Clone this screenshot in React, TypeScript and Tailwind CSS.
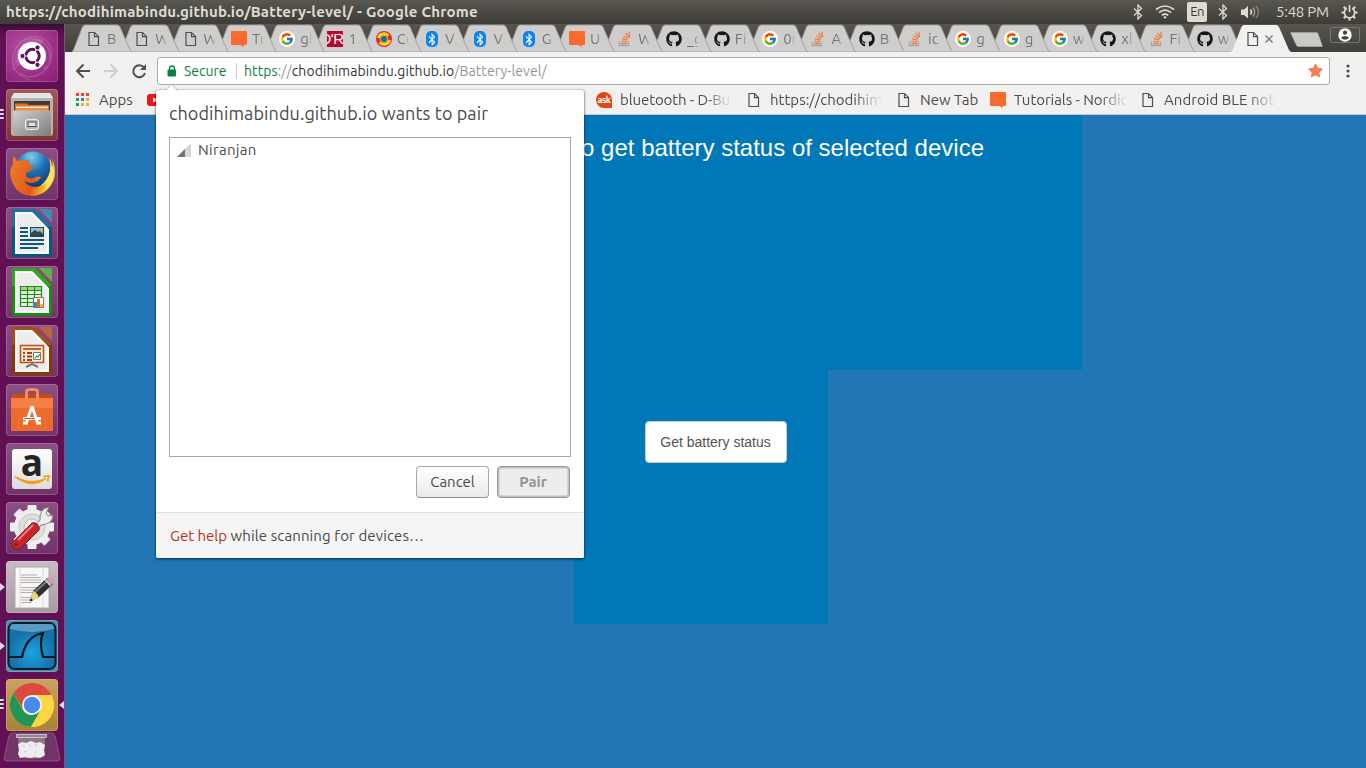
import React from "react";
import { FcGoogle } from "react-icons/fc";
import { FaGithub, FaBluetoothB, FaStar } from "react-icons/fa";

type IconKind = "doc" | "orange" | "google" | "dr" | "conrad" | "bt" | "so" | "gh";

function DocIcon() {
  return (
    <svg width="16" height="16" viewBox="0 0 16 16" fill="none" stroke="#4d4d4d" strokeWidth="1.2">
      <path d="M3 1.500h5.500l4 3.900v9.100H3zM8.500 1.600v4h4" />
    </svg>
  );
}

function Favicon({ kind }: { kind: IconKind }) {
  switch (kind) {
    case "doc":
      return <DocIcon />;
    case "orange":
      return (
        <svg width="16" height="16" viewBox="0 0 16 16">
          <path d="M1 0h14q1 0 1 1v12q0 1-1 1h-2.500l.5 2L9 14H1q-1 0-1-1V1q0-1 1-1z" fill="#fa6a2e" />
        </svg>
      );
    case "google":
      return (
        <div className="flex size-4 items-center justify-center rounded-full bg-white">
          <FcGoogle size={14} className="shrink-0" />
        </div>
      );
    case "dr":
      return (
        <div className="flex size-4 items-center justify-end overflow-hidden bg-[#b8082c] font-['Liberation_Sans',sans-serif] text-[15px] leading-4 tracking-[-0.5px] text-white">
          D'R
        </div>
      );
    case "conrad":
      return (
        <svg width="16" height="16" viewBox="0 0 16 16">
          <circle cx="8" cy="8" r="8" fill="#e02b26" />
          <path d="M1 7a7 7 0 0 1 12.500-3L11 5.500A4.500 4.500 0 0 0 4 7zM15 9a7 7 0 0 1-12.500 3L5 10.500A4.500 4.500 0 0 0 12 9z" fill="#ffd22e" />
          <circle cx="8" cy="8" r="4.300" fill="#f2a51d" />
          <circle cx="8" cy="8" r="3" fill="#146f9d" />
        </svg>
      );
    case "bt":
      return (
        <div className="flex h-4 w-3 items-center justify-center rounded-[5px] bg-[#0a84f5] text-white">
          <FaBluetoothB size={13} />
        </div>
      );
    case "so":
      return (
        <svg width="16" height="16" viewBox="0 0 16 16" fill="none">
          <path d="M2.500 10.500v4h9v-4" stroke="#a6a6a6" strokeWidth="1.300" />
          <path d="M4.300 12.700h5.700M4.400 10.300l5.700.6M5 7.600l5.400 1.600M6.300 4.800l4.800 2.900M8.600 2.200l3.500 4.500M11.800.800l.9 5.200" stroke="#f0793b" strokeWidth="1.300" />
        </svg>
      );
    case "gh":
      return <FaGithub size={16} color="#17151a" />;
  }
}

const tabs: { icon: IconKind; text: string }[] = [
  { icon: "doc", text: "B" },
  { icon: "doc", text: "W" },
  { icon: "doc", text: "W" },
  { icon: "orange", text: "Tu" },
  { icon: "google", text: "gl" },
  { icon: "dr", text: "1." },
  { icon: "conrad", text: "Co" },
  { icon: "bt", text: "V" },
  { icon: "bt", text: "V" },
  { icon: "bt", text: "G" },
  { icon: "orange", text: "U" },
  { icon: "so", text: "W" },
  { icon: "gh", text: "_g" },
  { icon: "gh", text: "Fi" },
  { icon: "google", text: "0(" },
  { icon: "so", text: "A" },
  { icon: "gh", text: "B" },
  { icon: "so", text: "ic" },
  { icon: "google", text: "g" },
  { icon: "google", text: "g" },
  { icon: "google", text: "w" },
  { icon: "gh", text: "xl" },
  { icon: "so", text: "Fi" },
  { icon: "gh", text: "w" },
];

function Tab({ icon, text, z, active = false }: { icon: IconKind; text: string; z: number; active?: boolean }) {
  return (
    <div className="relative h-[28px] w-[48.3px] shrink-0" style={{ zIndex: z }}>
      <svg className="absolute top-0 left-0" width="62" height="28" viewBox="0 0 62 28">
        <path
          d="M0 28L1.500 26L10 4Q11 1 13 1H45Q47 1 48 3L58 26L60 28z"
          fill={active ? "#f2f1f0" : "#d0cecd"}
          stroke={active ? "none" : "#a09e9b"}
          strokeWidth="0.9"
        />
      </svg>
      <div className="relative flex h-full items-center pt-[2px] pl-[14px]">
        <div className="flex w-4 shrink-0 justify-center">
          <Favicon kind={icon} />
        </div>
        {active ? (
          <svg className="ml-[3px] shrink-0" width="10" height="10" viewBox="0 0 10 10" stroke="#858585" strokeWidth="1.600">
            <path d="M1.500 1.500l7 7M8.500 1.500l-7 7" />
          </svg>
        ) : (
          <span className="ml-[5px] w-[11px] shrink-0 overflow-hidden [mask-image:linear-gradient(to_right,#000_60%,rgba(0,0,0,0.25))] text-[15px] leading-5 whitespace-nowrap text-[#777573]">
            {text}
          </span>
        )}
      </div>
    </div>
  );
}

function BluetoothGlyph() {
  return (
    <svg width="10" height="16" viewBox="0 0 10 16" fill="none" stroke="#dfdbd2" strokeWidth="1.300">
      <path d="M1 4.500l7.500 7L5 15V1l3.500 3.500L1 11.500" />
    </svg>
  );
}

function MenuBar() {
  return (
    <div className="flex h-6 shrink-0 items-center bg-linear-to-b from-[#595750] to-[#3d3c37] pl-[6px] text-[#dfdbd2]">
      <div className="text-[15px] leading-5 font-bold tracking-[0.225px] whitespace-nowrap">
        https://chodihimabindu.github.io/Battery-level/ - Google Chrome
      </div>
      <div className="ml-auto flex items-center">
        <BluetoothGlyph />
        <svg className="ml-[12px]" width="20" height="14" viewBox="0 0 20 14" fill="none" stroke="#dfdbd2" strokeWidth="1.700">
          <path d="M1 4.500q9-7 18 0M4 7.600q6-4.800 12 0M6.800 10.300q3.200-2.500 6.400 0" />
          <path d="M8.300 12l1.700 2 1.700-2q-1.700-1.300-3.400 0z" fill="#dfdbd2" stroke="none" />
        </svg>
        <span className="ml-[12px] flex h-[20px] w-5 items-center justify-center rounded-[2px] bg-[#dfdbd2] text-[13px] tracking-[-0.5px] text-[#3c3b37]">
          En
        </span>
        <span className="ml-[11px]">
          <BluetoothGlyph />
        </span>
        <svg className="ml-[12px]" width="22" height="16" viewBox="0 0 22 16" fill="none" strokeWidth="1.300">
          <path d="M1 5.500h3l4-3.500v12.500L4 11H1z" fill="#dfdbd2" />
          <path d="M10.500 5.500q2 2.500 0 5" stroke="#dfdbd2" strokeWidth="1.600" />
          <path d="M13 3.500q3.500 4.500 0 9" stroke="#a3a097" />
          <path d="M16 2q5 6 0 12" stroke="#85827a" />
        </svg>
        <span className="ml-[14px] w-[54px] text-[15px] leading-5 tracking-[-0.25px] whitespace-nowrap">5:48 PM</span>
        <svg className="mr-[8px] ml-[11px]" width="17" height="17" viewBox="0 0 17 17" fill="none" stroke="#dfdbd2">
          <path d="M5.800 4.200a5.200 5.200 0 1 0 5.400 0" strokeWidth="1.700" />
          <path d="M8.500 1v7" strokeWidth="1.700" />
          <path d="M2.800 2.800l2 2M14.200 2.800l-2 2M.5 8.500h3M13.500 8.500h3M2.800 14.200l2-2M14.200 14.200l-2-2M8.500 13.500v3" strokeWidth="2" />
        </svg>
      </div>
    </div>
  );
}

function LibreDoc({ main, light, children }: { main: string; light: string; children: React.ReactNode }) {
  return (
    <svg width="52" height="52" viewBox="0 0 52 52">
      <path d="M8 2h21l17 18v28q0 2-2 2H8q-2 0-2-2V4q0-2 2-2z" fill={main} />
      <path d="M6 20V4q0-2 2-2h21l17 18z" fill={light} opacity=".45" />
      <path d="M9 5h17l17 17.500V47H9z" fill="#fcfcfc" />
      <path d="M11 7h14l16 16.500V45H11z" fill="#ededed" />
      <path d="M33 2h11q2 0 2 2v12z" fill={light} opacity=".85" />
      <path d="M26 5l17 17.500-6-2z" fill="#fff" />
      {children}
    </svg>
  );
}

function UbuntuIcon() {
  return (
    <svg width="52" height="52" viewBox="0 0 52 52">
      <path d="M8 41C2 17 20 2 36 8c12 5 13 24 2 31M13 13c15-10 32-1 31 16-1 14-18 23-30 14M7 29c0 10 6 18 17 21" fill="none" stroke="#e3b6d9" strokeWidth="1.200" opacity=".25" />
      <path d="M10 38C5 20 20 4 38 10L26 26z" fill="#fff" opacity=".12" />
      <circle cx="26" cy="26" r="14" fill="#fff" />
      <circle cx="26.500" cy="26" r="6.700" fill="none" stroke="#5c1551" strokeWidth="3" />
      <path d="M26.500 26L13 26M26.500 26l7-12M26.500 26l7 12" stroke="#fff" strokeWidth="1.200" />
      <circle cx="26.500" cy="26" r="5" fill="#fff" />
      <g fill="#5c1551" stroke="#fff">
        <circle cx="16.500" cy="26" r="2.600" />
        <circle cx="31.500" cy="17.500" r="2.600" />
        <circle cx="31.500" cy="34.800" r="2.600" />
      </g>
    </svg>
  );
}

function FilesIcon() {
  return (
    <svg width="52" height="52" viewBox="0 0 52 52">
      <defs>
        <linearGradient id="cab" x1="0" y1="0" x2="1" y2="1">
          <stop offset="0" stopColor="#d0d0d0" />
          <stop offset="1" stopColor="#7c7c7c" />
        </linearGradient>
      </defs>
      <path d="M8 4h36l3 5v35q0 3-3 3H8q-3 0-3-3V9z" fill="#b4b4b4" />
      <path d="M8 4h36l3 5H5z" fill="#e6e6e6" />
      <path d="M8 12h36v10H8z" fill="#453b36" />
      <path d="M9 14.500h12l2 1.500h20v6H9z" fill="#dc742c" />
      <path d="M10 17.500h32v1.800H10z" fill="#f7e5d0" />
      <path d="M10 19.300h32V22H10z" fill="#ef8e36" />
      <path d="M7 21.500h38v24q0 1.500-1 1.500H8q-1 0-1-1z" fill="url(#cab)" />
      <rect x="19.500" y="30.500" width="13" height="10" rx="2" fill="#b5b5b5" stroke="#eee" />
      <rect x="22" y="33" width="8" height="4.500" fill="#e4e4e4" stroke="#505050" />
    </svg>
  );
}

function FirefoxIcon() {
  return (
    <svg width="52" height="52" viewBox="0 0 52 52">
      <defs>
        <radialGradient id="globe" cx=".45" cy=".15" r=".8">
          <stop offset="0" stopColor="#7fd0f2" />
          <stop offset=".5" stopColor="#1c71b4" />
          <stop offset="1" stopColor="#123b78" />
        </radialGradient>
        <linearGradient id="fox" x1="0" y1="0" x2="1" y2=".3">
          <stop offset="0" stopColor="#f07f25" />
          <stop offset=".65" stopColor="#e4571c" />
          <stop offset=".95" stopColor="#f9c430" />
        </linearGradient>
      </defs>
      <circle cx="27" cy="22" r="18.500" fill="url(#globe)" />
      <path d="M8 8l3 5q5-2 10 0l4-3q-3 4-2 7 2 2 5 2-2 4-7 5-2 3 0 5 4 3 8 0 3-1 6 0-3 5-9 6-5 0-8-3 3 7 12 7 10-1 13-11l3-9q2-5-2-11 5 6 5 16 0 10-7 17-7 7-16 7-14-1-19-12Q1 24 7 16q-1-4 1-8z" fill="url(#fox)" />
      <path d="M43 10q3 4 3 8 3 3 2 10-2 10-9 14 2-5 1-7-3 3-6 3 8-6 10-15 1-7-1-13z" fill="#fce15c" />
    </svg>
  );
}

function WriterIcon() {
  return (
    <LibreDoc main="#075783" light="#3a92c2">
      <path d="M14 21h8M14 25h8M14 29h8M14 33h24M14 37h24M14 41h18" stroke="#0e5786" strokeWidth="2" />
      <rect x="24.500" y="20.500" width="13" height="9" fill="#87c1de" stroke="#154865" />
      <path d="M25 29v-3l4-3 3 2 2-1 3 3v2z" fill="#34464d" />
      <circle cx="35.500" cy="22.500" r="1.500" fill="#f0b91f" />
    </LibreDoc>
  );
}

function CalcIcon() {
  return (
    <LibreDoc main="#188c0c" light="#55c43a">
      <path d="M14 20h22v21H14z" fill="#e2f5dc" />
      <path d="M14 20h22v4H14z" fill="#a0da8c" />
      <path d="M14.500 20.500h21v20h-21zM14 24.500h22M14 28.500h22M14 32.500h22M14 36.500h22M21.500 20v21M28.500 20v21" fill="none" stroke="#218b16" strokeWidth="1.200" />
      <path d="M27.500 31.500h10v10h-10z" fill="#fff" stroke="#777" />
      <path d="M28 36h3v5h-3z" fill="#2790cd" />
      <path d="M31 33h3v8h-3z" fill="#e16716" />
      <path d="M34 38h3v3h-3z" fill="#f4bd21" />
    </LibreDoc>
  );
}

function ImpressIcon() {
  return (
    <LibreDoc main="#8d3907" light="#bf6d38">
      <path d="M14.500 20.500h23v17h-23z" fill="#fbeade" stroke="#bf4e13" strokeWidth="1.500" />
      <path d="M17 24h18" stroke="#d35b1b" strokeWidth="2" />
      <path d="M17 28h2M21 28h5M17 31.500h2M21 31.500h5M17 35h2M21 35h5" stroke="#9d4617" strokeWidth="2" />
      <path d="M27.500 27.500h7v7h-7z" fill="#fff" stroke="#777" />
      <path d="M29 33l2-2 1 1 2-3" fill="none" stroke="#2fa53b" strokeWidth="1.200" />
      <path d="M26 38v2M26 39l-6 3M26 39l6 3" stroke="#777" strokeWidth="2" />
    </LibreDoc>
  );
}

function SoftwareIcon() {
  return (
    <svg width="52" height="52" viewBox="0 0 52 52">
      <path d="M5 14l2-4h38l2 4v33H5z" fill="#ed6b2d" />
      <path d="M5 14l2-4h38l2 4z" fill="#c54c1a" />
      <path d="M5 14h42v10H5z" fill="#f57e43" />
      <path d="M20.500 17V8q0-2.500 3-2.500h5q3 0 3 2.500v9" fill="none" stroke="#f08a5e" strokeWidth="3" />
      <path d="M20 40l5.500-16.500h1L32 40" fill="none" stroke="#fff" strokeWidth="3" />
      <path d="M17 34.500h18M17 39h5M30 39h5" stroke="#fff" strokeWidth="3" />
      <path d="M18 34.500h11" stroke="#d85a21" strokeWidth="1" />
    </svg>
  );
}

function AmazonIcon() {
  return (
    <div className="relative mx-auto mt-[6px] h-[40px] w-[40px] rounded-[3px] bg-linear-to-b from-[#fff] to-[#dcdcdc]">
      <div className="flex h-[40px] justify-center font-['Open_Sans',sans-serif] text-[37px] leading-[28px] font-bold text-[#242424]">
        <span className="-translate-y-[1px]">a</span>
      </div>
      <svg className="absolute top-0 left-0" width="40" height="40" viewBox="0 0 40 40">
        <path d="M3 27.500q16 9 31 2-15 11-31-2z" fill="#f79b17" stroke="#f79b17" strokeWidth="1.300" />
        <path d="M31 27.500l6-.5-1.500 5.500" fill="none" stroke="#f79b17" strokeWidth="1.700" />
      </svg>
    </div>
  );
}

function SettingsIcon() {
  return (
    <svg width="52" height="52" viewBox="0 0 52 52">
      <g fill="#ededed">
        {[0, 45, 90, 135].map((a) => (
          <rect key={a} x="21.500" y="3" width="9" height="44" rx="1" transform={`rotate(${a} 26 25)`} />
        ))}
        <circle cx="26" cy="25" r="18" />
      </g>
      <circle cx="26" cy="25" r="13" fill="#dedede" stroke="#c4c4c4" />
      <circle cx="26" cy="25" r="8" fill="#efefef" stroke="#bbb" />
      <path d="M29 24l5-6q-1-11 9-13l-3 6 2 3 5-1q0 9-12 10l-4 5z" fill="#eee" stroke="#858585" />
      <path d="M8 39l18-18q3-1 5 1l2 3q1 2-1 4L15 46q-4 3-8-1-3-3 1-6z" fill="#c7252c" stroke="#8e161c" />
      <path d="M12 38l15-15" stroke="#f5787b" strokeWidth="2" />
      <circle cx="10" cy="42.500" r="1.500" fill="#741b1d" />
    </svg>
  );
}

function EditorIcon() {
  return (
    <svg width="52" height="52" viewBox="0 0 52 52">
      <path d="M9 6h34v41H9z" fill="#f7f7f6" stroke="#aaa" />
      <path d="M14 7v39" stroke="#eba1a5" strokeWidth=".7" opacity=".7" />
      <path d="M37 7v39" stroke="#b0cde6" strokeWidth=".7" />
      <path d="M15 14h16M15 16.500h20M15 19h20M15 21.500h20M15 26.500h18M15 29h19M15 31.500h12M15 36.500h10M15 39h9M15 41.500h11" stroke="#a6a6a6" strokeWidth=".9" />
      <path d="M24 40l3-10 14-13 6 6-15 14z" fill="#2c2e30" />
      <path d="M28 32l13-12" stroke="#797c7f" strokeWidth="2" />
      <path d="M24 40l3-10q5 2 6 7z" fill="#e3d779" />
      <path d="M23.500 40.500l1.500-3.500 2 2.500z" fill="#222" />
      <path d="M41 18l1-1q2-2 4 0 3 2 1 5l-2 2z" fill="#dd94b3" />
      <path d="M39.500 18.500l5 6" stroke="#c9c9c9" strokeWidth="2" />
    </svg>
  );
}

function WiresharkIcon() {
  return (
    <svg width="52" height="52" viewBox="0 0 52 52">
      <defs>
        <radialGradient id="sea" cy=".65">
          <stop offset="0" stopColor="#1ba4e0" />
          <stop offset="1" stopColor="#156fa8" />
        </radialGradient>
      </defs>
      <rect x="2.500" y="3" width="47" height="46" rx="6" fill="url(#sea)" stroke="#101b22" strokeWidth="2" />
      <path d="M6 4h40q2 1 2 5Q27 15 4 9q0-4 2-5z" fill="#fff" opacity=".3" />
      <path d="M3 37h13q4-21 21-24-4 9 0 24h12" fill="none" stroke="#06131a" strokeWidth="2.200" />
    </svg>
  );
}

function ChromeIcon() {
  return (
    <svg width="52" height="52" viewBox="0 0 52 52">
      <circle cx="26" cy="26" r="22" fill="#fdd543" />
      <path d="M26 16h19.500A22 22 0 0 0 7.500 14l9.800 17z" fill="#da4a3d" />
      <path d="M7.500 14A22 22 0 0 0 25 48l9.700-17-8.700 5q-6 0-9-5z" fill="#229459" />
      <path d="M26 16h19.500A22 22 0 0 1 25 48l9.700-17z" fill="#fdd543" />
      <circle cx="26" cy="26" r="10" fill="#f5f5f5" />
      <circle cx="26" cy="26" r="8.200" fill="#4a89ed" />
    </svg>
  );
}

function LauncherTile({ className, children, marks }: { className: string; children: React.ReactNode; marks?: "one" | "three" }) {
  return (
    <div className="relative ml-[6px] h-[52px] w-[52px] shrink-0">
      <div className={`h-full w-full overflow-hidden rounded-[4px] shadow-[inset_0_0_0_1px_rgba(255,255,255,0.18)] ${className}`}>{children}</div>
      {marks === "one" && <div className="absolute top-[22px] -left-[6px] border-y-[4px] border-l-[5px] border-y-transparent border-l-[#dedade]" />}
      {marks === "three" && (
        <div className="absolute top-[20px] -left-[6px] flex flex-col gap-[2px]">
          <i className="h-[2px] w-[4px] rounded-r bg-[#dedade]" />
          <i className="h-[2px] w-[4px] rounded-r bg-[#dedade]" />
          <i className="h-[2px] w-[4px] rounded-r bg-[#dedade]" />
        </div>
      )}
    </div>
  );
}

const plum = "bg-linear-to-b from-[#8c4f84] to-[#713268]";

function Launcher() {
  return (
    <div className="relative flex w-[65px] shrink-0 flex-col gap-[7px] border-r border-[#8a4a80] bg-linear-to-b from-[#3d0b35] to-[#611153] to-[12px] pt-[6px]">
      <LauncherTile className="bg-[radial-gradient(circle_at_40%_35%,#b4559f,#8a1874)]"><UbuntuIcon /></LauncherTile>
      <LauncherTile className="bg-linear-to-b from-[#a1575b] to-[#803139]" marks="three"><FilesIcon /></LauncherTile>
      <LauncherTile className={plum}><FirefoxIcon /></LauncherTile>
      <LauncherTile className={plum}><WriterIcon /></LauncherTile>
      <LauncherTile className={plum}><CalcIcon /></LauncherTile>
      <LauncherTile className={plum}><ImpressIcon /></LauncherTile>
      <LauncherTile className={plum}><SoftwareIcon /></LauncherTile>
      <LauncherTile className={`${plum} flex flex-col`}><AmazonIcon /></LauncherTile>
      <LauncherTile className={plum}><SettingsIcon /></LauncherTile>
      <LauncherTile className="bg-linear-to-b from-[#c6bdc4] to-[#a899a5]" marks="one"><EditorIcon /></LauncherTile>
      <LauncherTile className="bg-[#4b8eae]" marks="one"><WiresharkIcon /></LauncherTile>
      <LauncherTile className="bg-linear-to-b from-[#c8a362] to-[#a98332]" marks="three"><ChromeIcon /></LauncherTile>
      <div className="absolute top-[677px] right-0 border-y-[4px] border-r-[5px] border-y-transparent border-r-[#dedade]" />
      <svg className="-mt-[6px] ml-[3px] shrink-0" width="58" height="30" viewBox="0 0 58 30">
        <path d="M9 1h40q2 0 3 3l5 22q0 3-3 3H4q-3 0-3-3L6 4q1-3 3-3z" fill="#713568" stroke="#8f5a88" strokeWidth=".8" />
        <path d="M15 4h27l-1 21q-12 3-25 0z" fill="#9a8a98" opacity=".75" />
        <path d="M13.500 2.500h30v3h-30z" fill="#8d8a8d" stroke="#d8d6d8" strokeWidth=".8" />
        <path d="M15 12l4-2 4 1 5-2 5 2 4-1 5 3-1 5 1 5-5 3-5-1-5 1-5-1-5 1-2-4 1-4z" fill="#eeecec" />
        <path d="M19 13l3 2M26 12l2 3M34 12l-2 3M21 20l3-1M32 21l2-2" fill="none" stroke="#d0cccf" />
      </svg>
    </div>
  );
}

function TabStrip() {
  return (
    <div className="flex h-[28px] shrink-0 bg-linear-to-b from-[#57554d] to-[#403f3a] pl-[7px]">
      <div className="isolate flex">
        {tabs.map((t, i) => (
          <Tab key={i} icon={t.icon} text={t.text} z={30 - i} />
        ))}
        <Tab icon="doc" text="" z={40} active />
      </div>
      <svg className="mt-[8px] ml-[10.5px] shrink-0" width="33" height="16" viewBox="0 0 33 16">
        <path d="M.5.5h26q1 0 1.500 1l4.500 13H9q-2 0-2.500-1z" fill="#cbc9c8" stroke="#aaa8a4" strokeWidth=".6" />
      </svg>
      <div className="mt-[3px] ml-[7px] flex h-[16px] w-[30px] items-center justify-center rounded-[2px] border border-[#77756f]">
        <svg width="14" height="14" viewBox="0 0 14 14">
          <circle cx="7" cy="7" r="6.700" fill="#fff" />
          <circle cx="7" cy="4.700" r="2.100" fill="#44423d" />
          <path d="M2.800 9.800Q7 6 11.200 9.800 7 13.500 2.800 9.800z" fill="#44423d" />
        </svg>
      </div>
    </div>
  );
}

function Toolbar() {
  return (
    <div className="flex h-[38px] shrink-0 items-center bg-[#f2f1f0] pl-[10px]">
      <svg width="16" height="16" viewBox="0 0 16 16" fill="none" stroke="#4f4f4f" strokeWidth="2"><path d="M15 8H2M8.500 1.500L2 8l6.500 6.500" /></svg>
      <svg className="ml-[12px]" width="16" height="16" viewBox="0 0 16 16" fill="none" stroke="#cfcdcb" strokeWidth="2"><path d="M1 8h13M7.500 1.500L14 8l-6.500 6.500" /></svg>
      <svg className="ml-[12px]" width="16" height="16" viewBox="0 0 16 16"><path d="M13 4.500A6 6 0 1 0 14 10" fill="none" stroke="#4f4f4f" strokeWidth="2" /><path d="M15 1v6H9z" fill="#4f4f4f" /></svg>
      <div className="ml-[10px] flex h-[28px] w-[1173px] items-center rounded-[3px] border border-[#aeaca9] bg-white px-[9px] text-[14px] leading-5">
        <svg width="10" height="12" viewBox="0 0 10 12"><path d="M2.500 5V3.500a2.500 2.500 0 0 1 5 0V5" fill="none" stroke="#0b8043" strokeWidth="1.300" /><rect x=".5" y="4.500" width="8.500" height="7" rx="1" fill="#0b8043" /></svg>
        <span className="ml-[7px] w-[44px] whitespace-nowrap text-[#0b8043]">Secure</span>
        <span className="ml-[8px] h-[16px] w-px bg-[#c9c9c9]" />
        <span className="ml-[7px] tracking-[0.1px] whitespace-nowrap text-[#969696]">
          <span className="text-[#0b8043]">https</span>://<span className="text-[#333]">chodihimabindu.github.io</span>/Battery-level/
        </span>
        <FaStar className="mb-[1px] -mr-[3px] ml-auto" size={15} color="#f58058" />
      </div>
      <svg className="ml-[16px]" width="4" height="16" viewBox="0 0 4 16" fill="#4b4b4b"><circle cx="2" cy="3" r="1.600" /><circle cx="2" cy="8" r="1.600" /><circle cx="2" cy="13" r="1.600" /></svg>
    </div>
  );
}

const appColors = ["bg-[#ee4035]", "bg-[#ee4035]", "bg-[#ee4035]", "bg-[#239b5c]", "bg-[#297fe8]", "bg-[#f2b028]", "bg-[#239b5c]", "bg-[#f2b028]", "bg-[#f2b028]"];
const fade = "overflow-hidden whitespace-nowrap [mask-image:linear-gradient(to_right,#000_75%,transparent)]";

function Bookmarks() {
  return (
    <div className="flex h-[25px] shrink-0 items-center border-b border-[#cbc9c7] bg-[#f2f1f0] pb-[5px] pl-[11px] text-[15px] leading-5 text-[#4c4c4c]">
      <div className="grid grid-cols-3 gap-[2px]">
        {appColors.map((c, i) => <i key={i} className={`size-[3px] ${c}`} />)}
      </div>
      <span className="ml-[10px] w-[34px]">Apps</span>
      <svg className="ml-[14px] shrink-0" width="16" height="12" viewBox="0 0 16 12"><rect width="16" height="12" rx="3" fill="#f5121b" /><path d="M6 3.500L11 6 6 8.500z" fill="#fff" /></svg>
      <div className="ml-[433px] flex size-4 shrink-0 items-center justify-center rounded-full rounded-br-[2px] bg-[#df4b18] text-[9px] leading-4 font-bold tracking-[-0.4px] text-white">ask</div>
      <span className={`ml-[8px] w-[112px] tracking-[-0.1px] ${fade}`}>bluetooth - D-Bus</span>
      <span className="ml-[14px]"><DocIcon /></span>
      <span className={`ml-[8px] w-[112px] ${fade}`}>https://chodihimabindu</span>
      <span className="ml-[14px]"><DocIcon /></span>
      <span className="ml-[8px] w-[58px] whitespace-nowrap">New Tab</span>
      <span className="ml-[12px]"><Favicon kind="orange" /></span>
      <span className={`ml-[8px] w-[114px] tracking-[-0.05px] ${fade}`}>Tutorials - Nordic</span>
      <span className="ml-[12px]"><DocIcon /></span>
      <span className={`ml-[8px] w-[112px] tracking-[0.05px] ${fade}`}>Android BLE notify</span>
    </div>
  );
}

function PageContent() {
  return (
    <div className="flex-1 bg-[#2276b5] pl-[509px] font-['Liberation_Sans',Arial,sans-serif]">
      <div className="h-[255px] w-[508px] bg-[#0077b6] pt-[19px] pr-[98px] text-right text-[24px] leading-7 whitespace-nowrap text-white">
        to get battery status of selected device
      </div>
      <div className="h-[254px] w-[254px] bg-[#0077b6] pt-[51px] pl-[70.500px]">
        <button className="h-[42px] w-[142px] rounded-[4px] border border-[#ccc] bg-white text-[14px] leading-5 whitespace-nowrap text-[#555]">
          Get battery status
        </button>
      </div>
    </div>
  );
}

function PairDialog() {
  return (
    <div className="absolute top-[90px] left-[156px] z-50 flex h-[468px] w-[428px] flex-col rounded-[2px] bg-white text-[#4a4a4a] shadow-[0_1px_3px_rgba(0,0,0,0.65),0_0_1px_rgba(0,0,0,0.5)]">
      <svg className="absolute -top-[6px] left-[9px]" width="13" height="7" viewBox="0 0 13 7"><path d="M0 7L6.500.5 13 7z" fill="#fff" /><path d="M0 6.500L6.500.5 13 6.500" fill="none" stroke="#b0aeac" strokeWidth=".8" /></svg>
      <div className="mt-[11px] ml-[13px] text-[18px] leading-[25px] tracking-[0.1px] whitespace-nowrap">
        chodihimabindu.github.io wants to pair
      </div>
      <div className="mt-[11px] ml-[13px] flex h-[320px] w-[402px] items-start border border-[#a7a7a7] pt-[2px] pl-[7px]">
        <svg className="mt-[3px]" width="14" height="14" viewBox="0 0 14 14"><path d="M14 0v14H0z" fill="#d6d6d6" /><path d="M8 6v8H0z" fill="#737373" /></svg>
        <span className="ml-[7px] text-[15px] leading-5 tracking-[0.3px]">Niranjan</span>
      </div>
      <div className="mt-[9px] mr-[14px] flex justify-end gap-[8px] text-[15px]">
        <button className="h-[32px] w-[73px] rounded-[4px] border border-[#aaa8a6] border-b-[#918f8d] bg-linear-to-b from-white to-[#eaeaea]">Cancel</button>
        <button className="h-[32px] w-[73px] rounded-[4px] border border-[#999795] bg-[#ededed] pr-px font-bold text-[#99938e] shadow-[inset_0_0_0_1.5px_#c2c0bf]">Pair</button>
      </div>
      <div className="mt-auto flex h-[46px] items-center rounded-b-[2px] border-t border-[#e3e3e3] bg-[#f5f5f5] pl-[14px] text-[15px] leading-5 tracking-[0.12px] whitespace-pre">
        <span className="tracking-[-0.02px] text-[#b93221]">Get help</span> while scanning for devices…
      </div>
    </div>
  );
}

export default function App() {
  return (
    <div className="relative flex h-[768px] w-[1366px] flex-col overflow-hidden font-['Ubuntu','Noto_Sans',sans-serif]">
      <MenuBar />
      <div className="flex min-h-0 flex-1">
        <Launcher />
        <div className="flex min-w-0 flex-1 flex-col">
          <TabStrip />
          <Toolbar />
          <Bookmarks />
          <PageContent />
        </div>
      </div>
      <PairDialog />
    </div>
  );
}
